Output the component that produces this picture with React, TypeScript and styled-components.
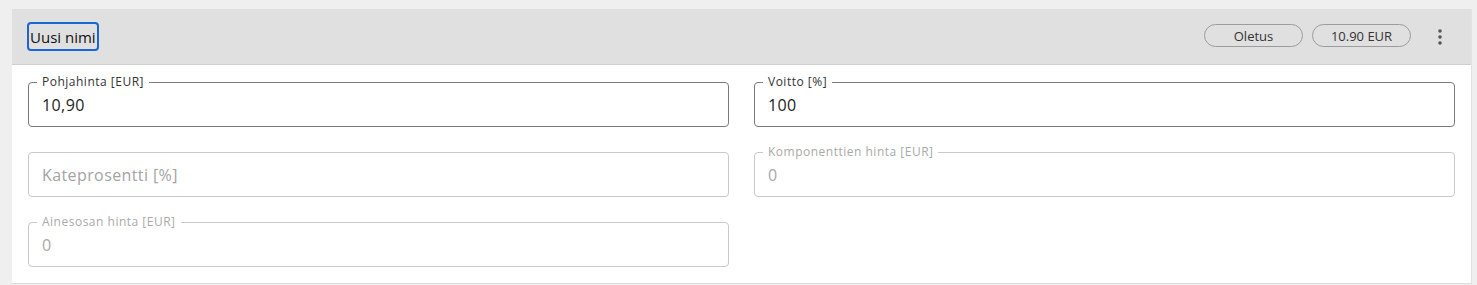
import React from "react";
import styled, { createGlobalStyle } from "styled-components";

const Global = createGlobalStyle`
  html, body { margin: 0; padding: 0; background: #efefef; }
  body { font-family: "Open Sans", "Noto Sans", sans-serif; }
  * { box-sizing: border-box; }
`;

const Page = styled.div`
  padding: 9px 5px 0 12px;
`;

const Card = styled.section`
  background: #fff;
  border-right: 1px solid #e2e2e2;
  border-bottom: 1px solid #dcdcdc;
`;

const Header = styled.header`
  height: 56px;
  background: #e0e0e0;
  border-bottom: 1px solid #cfcfcf;
  display: flex;
  align-items: center;
  padding: 0 19px 0 15px;
`;

const NameButton = styled.button`
  height: 29px;
  padding: 0 1px;
  background: #e0e0e0;
  border: 2px solid #1a66d2;
  border-radius: 4px;
  font-family: inherit;
  font-size: 15px;
  color: #111;
  cursor: pointer;
`;

const Spacer = styled.div`
  flex: 1;
`;

const Chips = styled.div`
  display: flex;
  gap: 9px;
  margin-top: -2px;
`;

const Chip = styled.span`
  width: 99px;
  height: 23px;
  border: 1px solid #9c9c9c;
  border-radius: 12px;
  display: flex;
  align-items: center;
  justify-content: center;
  font-size: 13px;
  color: #333;
`;

const Kebab = styled.button`
  width: 24px;
  height: 24px;
  margin-left: 17px;
  border: none;
  background: transparent;
  display: flex;
  align-items: center;
  justify-content: center;
  padding: 0;
  cursor: pointer;
`;

const Body = styled.div`
  display: grid;
  grid-template-columns: 1fr 1fr;
  column-gap: 25px;
  row-gap: 25px;
  padding: 17px 16px 16px 16px;
`;

const Field = styled.div<{ $active?: boolean }>`
  position: relative;
  height: 45px;
  border: 1px solid ${(p) => (p.$active ? "#7a7a7a" : "#c9c9c9")};
  border-radius: 4px;
  display: flex;
  align-items: center;
  padding: 0 13px;
  font-size: 16px;
  letter-spacing: 0.4px;
  color: ${(p) => (p.$active ? "#1e1e1e" : "#a9a9a9")};
`;

const Label = styled.span<{ $active?: boolean }>`
  position: absolute;
  top: -8px;
  left: 8px;
  padding: 0 5px;
  background: #fff;
  font-size: 12px;
  letter-spacing: 0.5px;
  line-height: 14px;
  color: ${(p) => (p.$active ? "#333" : "#a9a9a9")};
`;

const Placeholder = styled.span`
  color: #a3a3a3;
`;

type FieldProps = { label?: string; value?: string; placeholder?: string; active?: boolean };

function TextField({ label, value, placeholder, active }: FieldProps) {
  return (
    <Field $active={active}>
      {label && <Label $active={active}>{label}</Label>}
      {value !== undefined ? value : <Placeholder>{placeholder}</Placeholder>}
    </Field>
  );
}

export default function App() {
  return (
    <Page>
      <Global />
      <Card>
        <Header>
          <NameButton>Uusi nimi</NameButton>
          <Spacer />
          <Chips>
            <Chip>Oletus</Chip>
            <Chip>10.90 EUR</Chip>
          </Chips>
          <Kebab aria-label="Lisää">
            <svg width="4" height="16" viewBox="0 0 4 16">
              <circle cx="2" cy="2" r="1.8" fill="#555" />
              <circle cx="2" cy="8" r="1.8" fill="#555" />
              <circle cx="2" cy="14" r="1.8" fill="#555" />
            </svg>
          </Kebab>
        </Header>
        <Body>
          <TextField label="Pohjahinta [EUR]" value="10,90" active />
          <TextField label="Voitto [%]" value="100" active />
          <TextField placeholder="Kateprosentti [%]" />
          <TextField label="Komponenttien hinta [EUR]" value="0" />
          <TextField label="Ainesosan hinta [EUR]" value="0" />
        </Body>
      </Card>
    </Page>
  );
}
